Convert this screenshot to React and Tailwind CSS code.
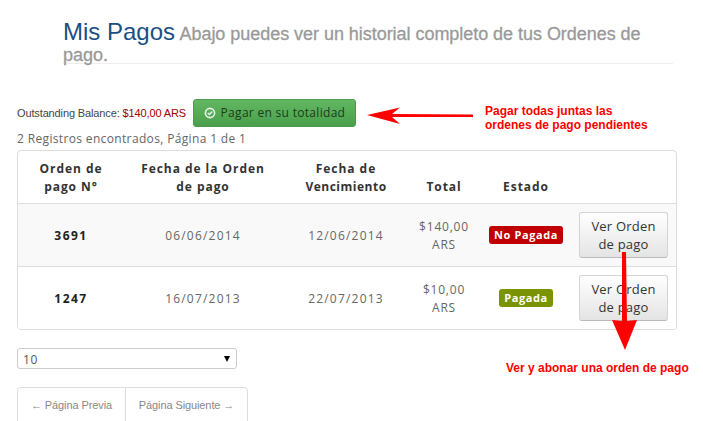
const sans = "font-['Open_Sans','DejaVu_Sans',sans-serif]";

const rows = [
  { id: "3691", fecha: "06/06/2014", vence: "12/06/2014", total: "$140,00", estado: "No Pagada", color: "bg-[#c00000]", bg: "bg-[#f9f9f9]" },
  { id: "1247", fecha: "16/07/2013", vence: "22/07/2013", total: "$10,00", estado: "Pagada", color: "bg-[#7a9400]", bg: "bg-white" },
];

function Annotations() {
  return (
    <>
      <svg className="absolute left-0 top-0 pointer-events-none" width="703" height="421">
        <path d="M367 115 L400 107.500 L392 114 L473 114.500 L473 117 L392 117 L400 124 Z" fill="#ff0000" />
        <path d="M622 252 L626 252 L627 321 L637 320 L625 350 L612 320 L622 321 Z" fill="#ff0000" />
      </svg>
      <div className="absolute left-[485px] top-[104px] font-['Liberation_Sans',sans-serif] font-bold text-[12px] leading-[14px] text-[#ff0000]">
        Pagar todas juntas las
        <br />
        ordenes de pago pendientes
      </div>
      <div className="absolute left-[506px] top-[361px] font-['Liberation_Sans',sans-serif] font-bold text-[12px] leading-[14px] text-[#ff0000]">
        Ver y abonar una orden de pago
      </div>
    </>
  );
}

export default function App() {
  return (
    <div className={`relative w-[703px] h-[421px] overflow-hidden bg-white ${sans} text-[#666]`}>
      {/* Page header */}
      <div className="ml-[63px] w-[610px] pt-[22px] h-[64px] border-b border-[#eeeeee] font-['Liberation_Sans',sans-serif]">
        <h1 className="leading-[20px] font-normal">
          <span className="text-[24px] text-[#1b4f83]">Mis Pagos</span>{" "}
          <span className="text-[18px] tracking-[-0.04px] text-[#999999] [-webkit-text-stroke:0.3px_#999999]">
            Abajo puedes ver un historial completo de tus Ordenes de pago.
          </span>
        </h1>
      </div>

      {/* Balance */}
      <div className="ml-[17px] mt-[35px] flex items-center h-[28px]">
        <span className="font-['Liberation_Sans',sans-serif] text-[11px] tracking-[-0.13px] text-[#444]">
          Outstanding Balance: <span className="text-[#a00000]">$140,00 ARS</span>
        </span>
        <button className="ml-[7px] w-[163px] h-[28px] flex items-center justify-center gap-[5px] rounded-[3px] border border-[#4a9c4a] bg-gradient-to-b from-[#62b862] to-[#4a9f4a] text-[12px] tracking-[0.3px] text-[#1d3a1d]">
          <svg width="12" height="12" viewBox="0 0 12 12">
            <circle cx="6" cy="6" r="4.600" fill="none" stroke="#e6f3e6" strokeWidth="1.600" />
            <path d="M3.800 6 L5.400 7.600 L8.300 4.600" fill="none" stroke="#e6f3e6" strokeWidth="1.400" />
          </svg>
          Pagar en su totalidad
        </button>
      </div>

      <div className="ml-[17px] mt-[1px] h-[22px] text-[12px] leading-[21px] tracking-[0.35px] text-[#666]">
        2 Registros encontrados, Página 1 de 1
      </div>

      {/* Orders table */}
      <div className="ml-[17px] w-[660px] h-[180px] border border-[#dddddd] rounded-[4px] overflow-hidden">
        <table className="w-[658px] table-fixed border-collapse text-[12px] tracking-[1.2px]">
          <colgroup>
            <col className="w-[106px]" />
            <col className="w-[158px]" />
            <col className="w-[128px]" />
            <col className="w-[68px]" />
            <col className="w-[96px]" />
            <col className="w-[102px]" />
          </colgroup>
          <thead>
            <tr className="h-[52px] text-[#333] leading-[18px] tracking-[0.95px]">
              <th className="align-bottom pb-[7px] font-bold">Orden de<br />pago N°</th>
              <th className="align-bottom pb-[7px] font-bold">Fecha de la Orden<br />de pago</th>
              <th className="align-bottom pb-[7px] font-bold">Fecha de<br /><span className="tracking-[0.5px]">Vencimiento</span></th>
              <th className="align-bottom pb-[7px] font-bold">Total</th>
              <th className="align-bottom pb-[7px] font-bold">Estado</th>
              <th></th>
            </tr>
          </thead>
          <tbody>
            {rows.map((r) => (
              <tr key={r.id} className={`h-[63px] border-t border-[#dddddd] text-center ${r.bg}`}>
                <td className="pt-[2px] font-bold text-[#222] tracking-[1.5px]">{r.id}</td>
                <td className="pt-[2px]">{r.fecha}</td>
                <td className="pt-[2px]">{r.vence}</td>
                <td className="pt-[2px] leading-[18px] tracking-[0.8px]">{r.total}<br />ARS</td>
                <td>
                  <span className={`inline-block h-[18px] px-[5px] rounded-[3px] ${r.color} text-white font-bold text-[11px] tracking-[0.6px] leading-[18px]`}>
                    {r.estado}
                  </span>
                </td>
                <td className="pl-[5px] text-left">
                  <button className="block w-[89px] h-[46px] rounded-[3px] border border-[#d4d4d4] border-b-[#bbbbbb] bg-gradient-to-b from-white to-[#e4e4e4] text-[13px] leading-[18px] tracking-[0.2px] text-[#333]">
                    Ver Orden<br />de pago
                  </button>
                </td>
              </tr>
            ))}
          </tbody>
        </table>
      </div>

      {/* Page size */}
      <div className="ml-[17px] mt-[18px] w-[220px] h-[21px] border border-[#cccccc] rounded-[3px] flex items-center justify-between pl-[5px] pr-[6px] text-[12px] tracking-[0.6px] text-[#555]">
        <span className="pt-[3px]">10</span>
        <span className="w-0 h-0 border-x-[3.500px] border-x-transparent border-t-[6px] border-t-black"></span>
      </div>

      {/* Pagination */}
      <div className="ml-[17px] mt-[18px] w-[231px] h-[50px] flex border border-[#dddddd] rounded-[4px] text-[#888] font-['Liberation_Sans',sans-serif] text-[11px] tracking-[-0.1px]">
        <div className="w-[108px] pt-[9px] text-center border-r border-[#dddddd]">← Página Previa</div>
        <div className="flex-1 pt-[9px] text-center">Página Siguiente →</div>
      </div>

      <Annotations />
    </div>
  );
}
